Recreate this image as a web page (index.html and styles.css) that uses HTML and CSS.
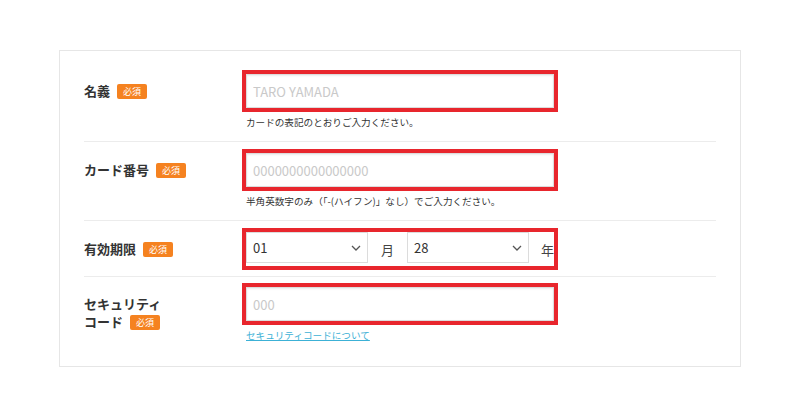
FILE: index.html
```html
<!DOCTYPE html>
<html lang="ja">
<head>
    <meta charset="UTF-8">
    <title>カード情報入力</title>
    <link rel="stylesheet" href="styles.css">
</head>
<body>
    <div class="card-form">
        <!-- 名義 -->
        <div class="form-row row-first">
            <div class="label">名義<span class="required">必須</span></div>
            <div class="field">
                <div class="mark">
                    <input type="text" class="text-input" placeholder="TARO YAMADA">
                </div>
                <p class="note">カードの表記のとおりご入力ください。</p>
            </div>
        </div>

        <!-- カード番号 -->
        <div class="form-row">
            <div class="label">カード番号<span class="required">必須</span></div>
            <div class="field">
                <div class="mark">
                    <input type="text" class="text-input" placeholder="0000000000000000">
                </div>
                <p class="note">半角英数字のみ（「-(ハイフン)」なし）でご入力ください。</p>
            </div>
        </div>

        <!-- 有効期限 -->
        <div class="form-row row-expire">
            <div class="label">有効期限<span class="required">必須</span></div>
            <div class="field">
                <div class="mark mark-select">
                    <div class="select-wrap">
                        <select class="select">
                            <option>01</option>
                        </select>
                        <svg class="chevron" width="10" height="6" viewBox="0 0 10 6"><path d="M1 1l4 4 4-4" fill="none" stroke="#555" stroke-width="1.3"/></svg>
                    </div>
                    <span class="unit unit-month">月</span>
                    <div class="select-wrap">
                        <select class="select">
                            <option>28</option>
                        </select>
                        <svg class="chevron" width="10" height="6" viewBox="0 0 10 6"><path d="M1 1l4 4 4-4" fill="none" stroke="#555" stroke-width="1.3"/></svg>
                    </div>
                    <span class="unit unit-year">年</span>
                </div>
            </div>
        </div>

        <!-- セキュリティコード -->
        <div class="form-row row-last">
            <div class="label">セキュリティ<br>コード<span class="required">必須</span></div>
            <div class="field">
                <div class="mark">
                    <input type="text" class="text-input" placeholder="000">
                </div>
                <p class="note"><a href="#" class="help-link">セキュリティコードについて</a></p>
            </div>
        </div>
    </div>
</body>
</html>
```

FILE: styles.css
```css
/* General reset */
* {
    margin: 0;
    padding: 0;
    box-sizing: border-box;
}

body {
    font-family: "Noto Sans CJK JP", "Noto Sans", sans-serif;
    color: #333;
    background-color: #fff;
}

.card-form {
    width: 682px;
    margin: 50px 0 0 59px;
    border: 1px solid #e6e6e6;
    padding: 19px 24px 24px;
}

.form-row {
    display: grid;
    grid-template-columns: 158px 316px;
    padding: 7px 0 12px;
    border-bottom: 1px solid #ececec;
}

.row-first {
    padding-top: 0;
}

.row-expire {
    padding-bottom: 6px;
}

.row-last {
    padding-top: 6px;
    padding-bottom: 0;
    border-bottom: none;
}

/* Label column */
.label {
    font-size: 13px;
    font-weight: bold;
    line-height: 18px;
    padding-top: 12px;
    color: #333;
}

.required {
    display: inline-block;
    margin-left: 7px;
    padding: 0 6px;
    background-color: #f58220;
    color: #fff;
    font-size: 9px;
    font-weight: normal;
    line-height: 15px;
    border-radius: 2px;
    vertical-align: 1px;
}

/* Red highlight around the fields */
.mark {
    border: 4px solid #e8262d;
    height: 42px;
}

.mark-select {
    display: flex;
    align-items: center;
}

.text-input {
    display: block;
    width: 100%;
    height: 34px;
    border: 1px solid #dcdcdc;
    box-shadow: inset 0 1px 2px rgba(0, 0, 0, 0.08);
    padding: 0 6px;
    font-family: "Noto Sans CJK JP", "Noto Sans", sans-serif;
    font-size: 13px;
    color: #333;
    outline: none;
}

.text-input::placeholder {
    color: #c9c9c9;
}

.select-wrap {
    position: relative;
    width: 122px;
    height: 31px;
    margin-top: -3px;
}

.select {
    appearance: none;
    -webkit-appearance: none;
    width: 100%;
    height: 100%;
    border: 1px solid #dcdcdc;
    background-color: #fff;
    padding: 0 6px;
    font-family: "Noto Sans CJK JP", "Noto Sans", sans-serif;
    font-size: 13px;
    color: #333;
    outline: none;
}

.chevron {
    position: absolute;
    right: 7px;
    top: 13px;
    pointer-events: none;
}

.unit {
    font-size: 13px;
    color: #444;
}

.unit-month {
    margin: 0 13px;
}

.unit-year {
    margin-left: 12px;
}

/* Help text under fields */
.note {
    margin-top: 3px;
    padding-left: 4px;
    font-size: 9.6px;
    line-height: 14px;
    color: #333;
}

.help-link {
    color: #3cb1d6;
    text-decoration: underline;
}
```
